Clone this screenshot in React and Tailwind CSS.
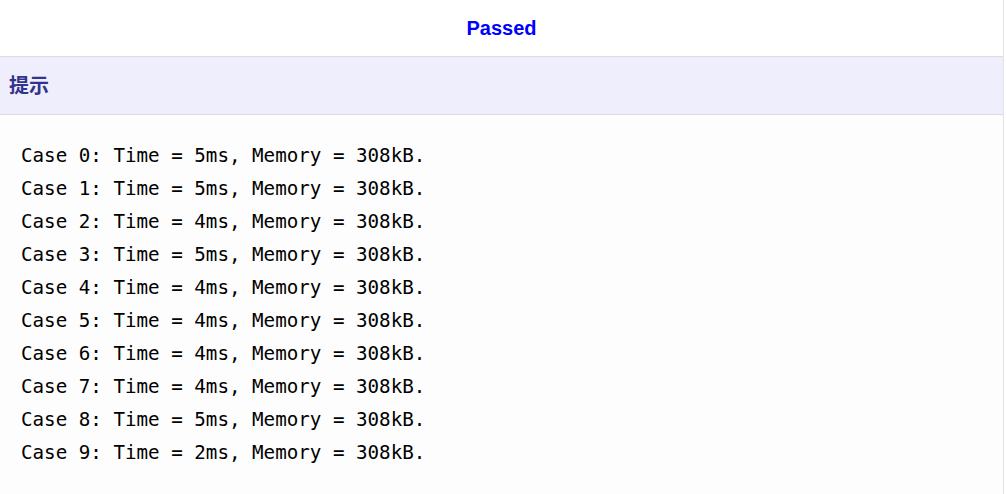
import React from "react";

const cases = [5, 5, 4, 5, 4, 4, 4, 4, 5, 2];

export default function App() {
  return (
    <div className="w-[1006px] h-[494px] bg-white overflow-hidden">
      <div className="w-[1004px] h-full border-r border-[#e3e3e8] bg-[#fdfdfd]">
        <div className="h-[57px] bg-white flex items-center justify-center border-b border-[#dcdcdc]">
          <span className="text-[20px] font-bold text-[#0000ff] font-['Liberation_Sans',Arial,sans-serif]">
            Passed
          </span>
        </div>
        <div className="h-[58px] bg-[#eeeefc] border-b border-[#dcdcdc] flex items-center px-[9px]">
          <span className="text-[20px] font-bold text-[#33338f] font-['Liberation_Sans','Noto_Sans_CJK_SC',sans-serif]">
            提示
          </span>
        </div>
        <div className="pt-[24px] pl-[21px] font-['DejaVu_Sans_Mono',monospace] text-[19.2px] leading-[33px] text-black">
          {cases.map((t, i) => (
            <div key={i} className="whitespace-pre">
              {`Case ${i}: Time = ${t}ms, Memory = 308kB.`}
            </div>
          ))}
        </div>
      </div>
    </div>
  );
}
